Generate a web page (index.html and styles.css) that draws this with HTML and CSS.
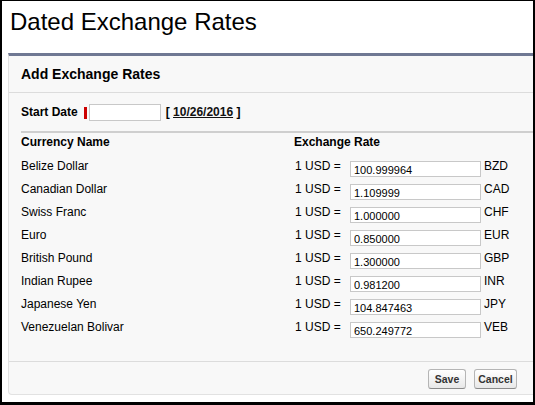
FILE: index.html
```html
<!DOCTYPE html>
<html lang="en">
<head>
<meta charset="utf-8">
<title>Dated Exchange Rates</title>
<link rel="stylesheet" href="styles.css">
</head>
<body>
<div class="frame">
  <h1 class="title">Dated Exchange Rates</h1>
  <section class="panel">
    <div class="panel-header">
      <h2 class="panel-title">Add Exchange Rates</h2>
    </div>
    <div class="panel-body">
      <div class="start-row">
        <label class="start-label">Start Date</label>
        <span class="required"></span>
        <input class="date-input" type="text" value="">
        <span class="date-pick">[ <a class="date-link" href="#">10/26/2016</a> ]</span>
      </div>
      <div class="rates">
        <div class="th">Currency Name</div>
        <div class="th th-rate">Exchange Rate</div>

        <div class="name">Belize Dollar</div>
        <div class="usd">1 USD =</div>
        <input class="rate-input" type="text" value="100.999964">
        <div class="code">BZD</div>

        <div class="name">Canadian Dollar</div>
        <div class="usd">1 USD =</div>
        <input class="rate-input" type="text" value="1.109999">
        <div class="code">CAD</div>

        <div class="name">Swiss Franc</div>
        <div class="usd">1 USD =</div>
        <input class="rate-input" type="text" value="1.000000">
        <div class="code">CHF</div>

        <div class="name">Euro</div>
        <div class="usd">1 USD =</div>
        <input class="rate-input" type="text" value="0.850000">
        <div class="code">EUR</div>

        <div class="name">British Pound</div>
        <div class="usd">1 USD =</div>
        <input class="rate-input" type="text" value="1.300000">
        <div class="code">GBP</div>

        <div class="name">Indian Rupee</div>
        <div class="usd">1 USD =</div>
        <input class="rate-input" type="text" value="0.981200">
        <div class="code">INR</div>

        <div class="name">Japanese Yen</div>
        <div class="usd">1 USD =</div>
        <input class="rate-input" type="text" value="104.847463">
        <div class="code">JPY</div>

        <div class="name">Venezuelan Bolivar</div>
        <div class="usd">1 USD =</div>
        <input class="rate-input" type="text" value="650.249772">
        <div class="code">VEB</div>
      </div>
    </div>
    <div class="panel-footer">
      <button class="btn btn-save" type="button">Save</button>
      <button class="btn btn-cancel" type="button">Cancel</button>
    </div>
  </section>
</div>
</body>
</html>
```

FILE: styles.css
```css
* {
  box-sizing: border-box;
}

html, body {
  margin: 0;
  padding: 0;
  background: #fff;
}

body {
  font-family: "Liberation Sans", Arial, Helvetica, sans-serif;
  color: #000;
}

.frame {
  width: 535px;
  height: 405px;
  border-style: solid;
  border-color: #000;
  border-width: 1px 2px 3px 2px;
  background: #fff;
  overflow: hidden;
}

.title {
  margin: 0;
  padding: 7px 0 0 8px;
  font-size: 24px;
  line-height: 28px;
  font-weight: normal;
  color: #000;
}

.panel {
  margin: 17px 0 0 6px;
  background: #f8f8f8;
  border-top: 3px solid #6f7893;
  border-left: 1px solid #e2e2e2;
  border-bottom: 1px solid #e2e2e2;
  border-bottom-left-radius: 4px;
}

.panel-header {
  padding: 10px 12px 9px 12px;
  border-bottom: 1px solid #dcdcdc;
}

.panel-title {
  margin: 0;
  font-size: 14px;
  line-height: 17px;
  font-weight: bold;
  color: #000;
}

.panel-body {
  padding: 0 0 19px 12px;
}

.start-row {
  display: flex;
  align-items: center;
  padding: 11px 0 10px 0;
  font-size: 12px;
  line-height: 17px;
}

.start-label {
  font-weight: bold;
  margin-right: 6px;
}

.required {
  width: 3px;
  height: 12px;
  background: #c00;
  margin-right: 2px;
}

.date-input {
  width: 72px;
  height: 17px;
  border: 1px solid #c8c8c8;
  background: #fff;
  padding: 0 3px;
  margin: 0 5px 0 0;
  font-size: 11px;
}

.date-pick {
  font-weight: bold;
  color: #000;
}

.date-link {
  color: #111;
  text-decoration: underline;
}

.rates {
  display: grid;
  grid-template-columns: 273px 56px 131px 1fr;
  grid-template-rows: 25px;
  grid-auto-rows: 23px;
  border-top: 2px solid #cfcfcf;
  font-size: 12px;
  line-height: 15px;
}

.th {
  font-weight: bold;
  padding-top: 2px;
}

.th-rate {
  grid-column: 2 / 5;
}

.name,
.usd,
.code {
  margin-top: 1px;
}

.usd {
  padding-left: 1px;
}

.code {
  padding-left: 3px;
}

.rate-input {
  align-self: start;
  margin: 3px 0 0 0;
  width: 131px;
  height: 16px;
  border: 1px solid #c8c8c8;
  background: #fff;
  padding: 2px 3px 0 3px;
  font-family: "Liberation Sans", Arial, Helvetica, sans-serif;
  font-size: 11px;
  color: #000;
}

.panel-footer {
  display: flex;
  justify-content: flex-end;
  gap: 8px;
  padding: 7px 16px 5px 0;
  border-top: 1px solid #dcdcdc;
}

.btn {
  height: 20px;
  padding: 0;
  margin: 0;
  border: 1px solid #b5b5b5;
  border-bottom-color: #8a8a8a;
  border-radius: 3px;
  background: linear-gradient(#ffffff, #e8e8e8);
  font-family: "Liberation Sans", Arial, Helvetica, sans-serif;
  font-size: 10.5px;
  font-weight: bold;
  color: #333;
  text-align: center;
}

.btn-save {
  width: 38px;
}

.btn-cancel {
  width: 43px;
}
```
